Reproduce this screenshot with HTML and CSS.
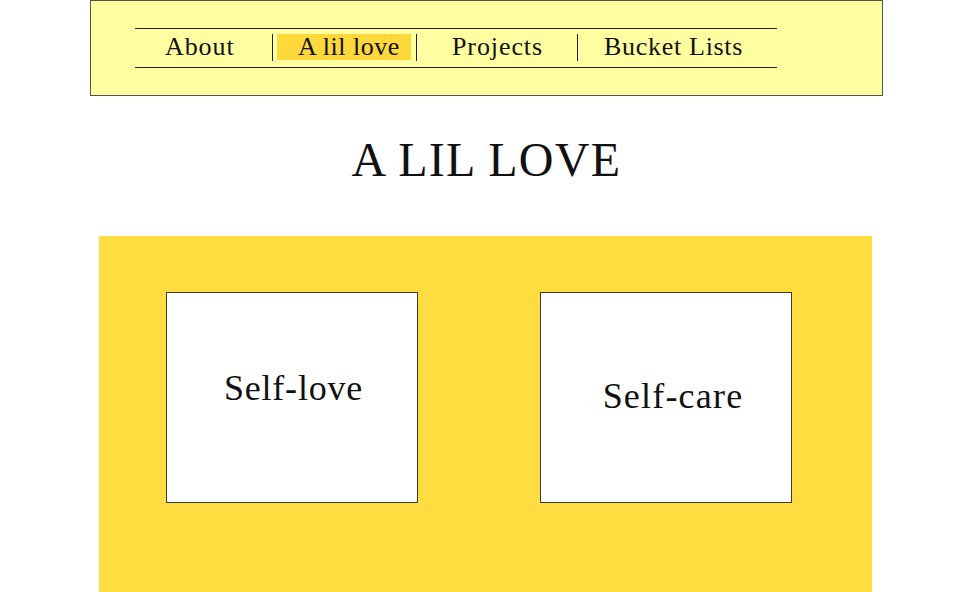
FILE: index.html
```html
<!DOCTYPE html>
<html lang="en">
<head>
<meta charset="utf-8">
<title>A lil love</title>
<link rel="stylesheet" href="styles.css">
</head>
<body>
<div class="page">
  <header class="header">
    <nav class="nav">
      <a class="nav-item item-about">About</a>
      <span class="sep"></span>
      <a class="nav-item item-love active">A lil love</a>
      <span class="sep"></span>
      <a class="nav-item item-projects">Projects</a>
      <span class="sep"></span>
      <a class="nav-item item-bucket">Bucket Lists</a>
    </nav>
  </header>
  <h1 class="title">A LIL LOVE</h1>
  <section class="panel">
    <div class="card card-love"><span class="card-label">Self-love</span></div>
    <div class="card card-care"><span class="card-label">Self-care</span></div>
  </section>
</div>
</body>
</html>
```
FILE: styles.css
```css
html, body {
  margin: 0;
  padding: 0;
  background: #ffffff;
  overflow: hidden;
}
body {
  font-family: "Liberation Serif", "Times New Roman", serif;
  color: #111;
}
.page {
  width: 793px;
  margin-left: 90px;
  display: flex;
  flex-direction: column;
}
.header {
  box-sizing: border-box;
  height: 96px;
  width: 793px;
  background: #ffffa1;
  border: 1px solid #55554a;
  padding: 27px 0 0 44px;
}
.nav {
  box-sizing: border-box;
  width: 642px;
  height: 40px;
  border-top: 1px solid #1e1e1e;
  border-bottom: 1px solid #1e1e1e;
  display: flex;
  align-items: flex-start;
}
.nav-item {
  box-sizing: border-box;
  font-size: 26px;
  letter-spacing: 0.9px;
  line-height: 26px;
  height: 26px;
  margin-top: 5px;
  white-space: nowrap;
  color: #111;
}
.item-about { width: 137px; padding-left: 30px; }
.item-love {
  width: 134px;
  margin-left: 4px;
  margin-right: 5px;
  padding-left: 21px;
  letter-spacing: 0.5px;
  background: #ffd83c;
}
.item-projects { width: 160px; padding-left: 35px; }
.item-bucket { padding-left: 26px; letter-spacing: 0.7px; }
.sep {
  width: 1px;
  height: 27px;
  margin-top: 5px;
  background: #1e1e1e;
}
.title {
  margin: 36px 0 0 0;
  font-weight: normal;
  font-size: 48px;
  line-height: 55px;
  letter-spacing: 1.3px;
  text-align: center;
  color: #111;
}
.panel {
  box-sizing: border-box;
  margin: 49px 0 0 9px;
  width: 773px;
  height: 360px;
  background: #ffdd40;
  padding: 56px 0 0 67px;
  display: flex;
  align-items: flex-start;
  gap: 122px;
}
.card {
  box-sizing: border-box;
  width: 252px;
  height: 211px;
  background: #ffffff;
  border: 1px solid #3e3a2c;
  text-align: center;
}
.card-label {
  display: block;
  font-size: 36px;
  line-height: 41px;
  letter-spacing: 0.8px;
  color: #111;
}
.card-love .card-label { padding: 75px 0 0 3px; }
.card-care .card-label { padding: 83px 0 0 14px; letter-spacing: 1.2px; }
```
